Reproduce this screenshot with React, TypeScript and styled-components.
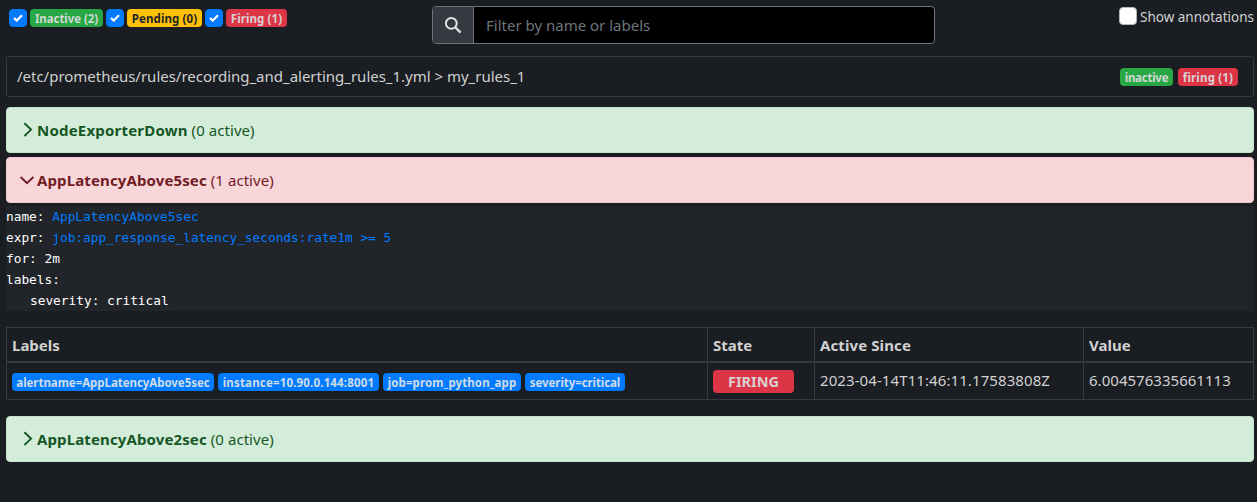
import React from 'react';
import styled, { createGlobalStyle } from 'styled-components';

const GlobalStyle = createGlobalStyle`
  *, *::before, *::after { box-sizing: border-box; }
  body {
    margin: 0;
    min-height: 100vh;
    background: #1a1d21;
    color: #d1d1d2;
    font: 400 15px/24px "Noto Sans", "Open Sans", sans-serif;
  }
`;

const Page = styled.main`
  padding: 6px 3px 0 6px;
`;

const Toolbar = styled.header`
  display: grid;
  grid-template-columns: 426px 503px 1fr;
  height: 50px;
  align-items: start;
`;

const Filters = styled.div`
  display: flex;
  gap: 3px;
  padding: 3px 0 0 3px;
`;

const CheckBox = styled.span<{ $checked?: boolean }>`
  display: flex;
  align-items: center;
  justify-content: center;
  width: 18px;
  height: 18px;
  border-radius: 4px;
  border: 1px solid ${p => (p.$checked ? '#007bff' : '#adb5bd')};
  background: ${p => (p.$checked ? '#007bff' : '#fff')};
`;

const tones = {
  success: ['#28a745', '#d1d8d4'],
  warning: ['#ffc107', '#212529'],
  danger: ['#dc3545', '#d9d0d3'],
  primary: ['#007bff', '#cfdcea'],
};
type Tone = keyof typeof tones;

const Badge = styled.span<{ $tone: Tone; $width: number; $track?: number }>`
  display: flex;
  justify-content: center;
  width: ${p => p.$width}px;
  height: 18px;
  border-radius: 4px;
  background: ${p => tones[p.$tone][0]};
  color: ${p => tones[p.$tone][1]};
  font-size: 11.5px;
  font-weight: 700;
  line-height: 19px;
  letter-spacing: ${p => p.$track ?? 0}px;
  white-space: nowrap;
`;

const StateBadge = styled(Badge)`
  height: 23px;
  margin-top: 4px;
  font-size: 14.5px;
  line-height: 23px;
`;

const FilterGroup = styled.div`
  display: flex;
  gap: 3px;
`;

const SearchBox = styled.div`
  display: flex;
  height: 38px;
  border: 1px solid #6c757d;
  border-radius: 4px;
  overflow: hidden;
  background: #000;
`;

const SearchAddon = styled.div`
  display: flex;
  align-items: center;
  justify-content: center;
  width: 41px;
  border-right: 1px solid #6c757d;
  background: #343a40;
`;

const SearchInput = styled.input`
  flex: 1;
  padding: 0 12px;
  border: 0;
  outline: 0;
  background: transparent;
  color: #d1d1d2;
  font: inherit;
  &::placeholder { color: #6c757d; opacity: 1; }
`;

const Annotations = styled.label`
  display: flex;
  justify-content: flex-end;
  gap: 3px;
  padding-top: 1px;
  font-size: 13.5px;
  line-height: 21px;
  white-space: nowrap;
`;

const GroupHeader = styled.section`
  display: flex;
  align-items: center;
  justify-content: space-between;
  height: 41px;
  padding: 0 15px 0 10px;
  border: 1px solid #343a40;
  border-radius: 3px;
`;

const GroupName = styled.span`
  padding-bottom: 2px;
  letter-spacing: -0.01px;
`;

const GroupBadges = styled.div`
  display: flex;
  gap: 5px;
`;

const Alert = styled.section<{ $tone: 'success' | 'danger'; $top: number }>`
  display: flex;
  align-items: center;
  height: 46px;
  margin-top: ${p => p.$top}px;
  padding-left: 12px;
  border: 1px solid ${p => (p.$tone === 'success' ? '#c3e6cb' : '#f5c6cb')};
  border-radius: 4px;
  background: ${p => (p.$tone === 'success' ? '#d4edda' : '#f8d7da')};
  color: ${p => (p.$tone === 'success' ? '#155724' : '#721c24')};
  letter-spacing: 0.06px;
  white-space: pre;
  svg { flex: none; margin-right: 2px; }
`;

const AlertName = styled.strong<{ $track?: number }>`
  letter-spacing: ${p => p.$track ?? 0.12}px;
`;

const RuleCode = styled.pre`
  height: 105px;
  margin: 3px 0 16px;
  background: #212529;
  color: #fff;
  font: 400 12.8px/21px "DejaVu Sans Mono", monospace;
  b { color: #007bff; font-weight: 400; }
`;

const IndentedLine = styled.span`
  padding-left: 24px;
`;

const Table = styled.table`
  width: 1248px;
  border-collapse: collapse;
  table-layout: fixed;
`;

const Th = styled.th<{ $width: number; $track?: number }>`
  width: ${p => p.$width}px;
  height: 34px;
  padding: 3px 5px 1px;
  border: 1px solid #343a40;
  border-bottom-width: 2px;
  text-align: left;
  font-weight: 700;
  letter-spacing: ${p => p.$track ?? 0}px;
`;

const Td = styled.td<{ $track?: number }>`
  height: 38px;
  padding: 0 5px 2px;
  border: 1px solid #343a40;
  letter-spacing: ${p => p.$track ?? 0}px;
`;

const LabelList = styled.div`
  display: flex;
  gap: 4px;
  padding-top: 4px;
`;

const Tick = () => (
  <svg width="10" height="8" viewBox="0 0 10 8" fill="none" stroke="#fff" strokeWidth="2.2">
    <path d="M1 4 3.7 6.6 9 1.2" />
  </svg>
);

const SearchIcon = () => (
  <svg width="18" height="18" viewBox="0 0 18 18" fill="none" stroke="#dee2e6" strokeWidth="2">
    <circle cx="7.3" cy="7.3" r="5.4" />
    <path d="M11.2 11.2 16.6 16.6" strokeWidth="2.3" />
  </svg>
);

const Chevron = ({ open }: { open?: boolean }) => (
  <svg width="16" height="16" viewBox="0 0 16 16" fill="none" stroke="currentColor" strokeWidth="1.9">
    <path d={open ? 'M1.6 5 8 11.2 14.4 5' : 'M5.4 1.2 12.1 7.6 5.4 14'} />
  </svg>
);

const filters: { text: string; tone: Tone; width: number; track: number }[] = [
  { text: 'Inactive (2)', tone: 'success', width: 73, track: -0.07 },
  { text: 'Pending (0)', tone: 'warning', width: 75, track: 0.1 },
  { text: 'Firing (1)', tone: 'danger', width: 61, track: 0.1 },
];

const labels = [
  { text: 'alertname=AppLatencyAbove5sec', width: 202, track: -0.05 },
  { text: 'instance=10.90.0.144:8001', width: 161, track: 0.17 },
  { text: 'job=prom_python_app', width: 138, track: 0.1 },
  { text: 'severity=critical', width: 100, track: -0.08 },
];

export default function App() {
  return (
    <>
      <GlobalStyle />
      <Page>
        <Toolbar>
          <Filters>
            {filters.map(f => (
              <FilterGroup key={f.text}>
                <CheckBox $checked><Tick /></CheckBox>
                <Badge $tone={f.tone} $width={f.width} $track={f.track}>{f.text}</Badge>
              </FilterGroup>
            ))}
          </Filters>
          <SearchBox>
            <SearchAddon><SearchIcon /></SearchAddon>
            <SearchInput placeholder="Filter by name or labels" />
          </SearchBox>
          <Annotations><CheckBox />Show annotations</Annotations>
        </Toolbar>

        <GroupHeader>
          <GroupName>/etc/prometheus/rules/recording_and_alerting_rules_1.yml &gt; my_rules_1</GroupName>
          <GroupBadges>
            <Badge $tone="success" $width={53} $track={-0.25}>inactive</Badge>
            <Badge $tone="danger" $width={60} $track={0.18}>firing (1)</Badge>
          </GroupBadges>
        </GroupHeader>

        <Alert $tone="success" $top={10}><Chevron /><AlertName $track={0.2}>NodeExporterDown</AlertName> (0 active)</Alert>
        <Alert $tone="danger" $top={4}><Chevron open /><AlertName>AppLatencyAbove5sec</AlertName> (1 active)</Alert>

        <RuleCode>
          name: <b>AppLatencyAbove5sec</b>{'\n'}
          expr: <b>job:app_response_latency_seconds:rate1m &gt;= 5</b>{'\n'}
          for: 2m{'\n'}
          labels:{'\n'}
          <IndentedLine>severity: critical</IndentedLine>
        </RuleCode>

        <Table>
          <thead>
            <tr>
              <Th $width={701}>Labels</Th>
              <Th $width={107}>State</Th>
              <Th $width={269} $track={0.1}>Active Since</Th>
              <Th $width={170}>Value</Th>
            </tr>
          </thead>
          <tbody>
            <tr>
              <Td>
                <LabelList>
                  {labels.map(l => (
                    <Badge key={l.text} $tone="primary" $width={l.width} $track={l.track}>{l.text}</Badge>
                  ))}
                </LabelList>
              </Td>
              <Td><StateBadge $tone="danger" $width={81}>FIRING</StateBadge></Td>
              <Td $track={0.09}>2023-04-14T11:46:11.17583808Z</Td>
              <Td $track={0.03}>6.004576335661113</Td>
            </tr>
          </tbody>
        </Table>

        <Alert $tone="success" $top={16}><Chevron /><AlertName>AppLatencyAbove2sec</AlertName> (0 active)</Alert>
      </Page>
    </>
  );
}
